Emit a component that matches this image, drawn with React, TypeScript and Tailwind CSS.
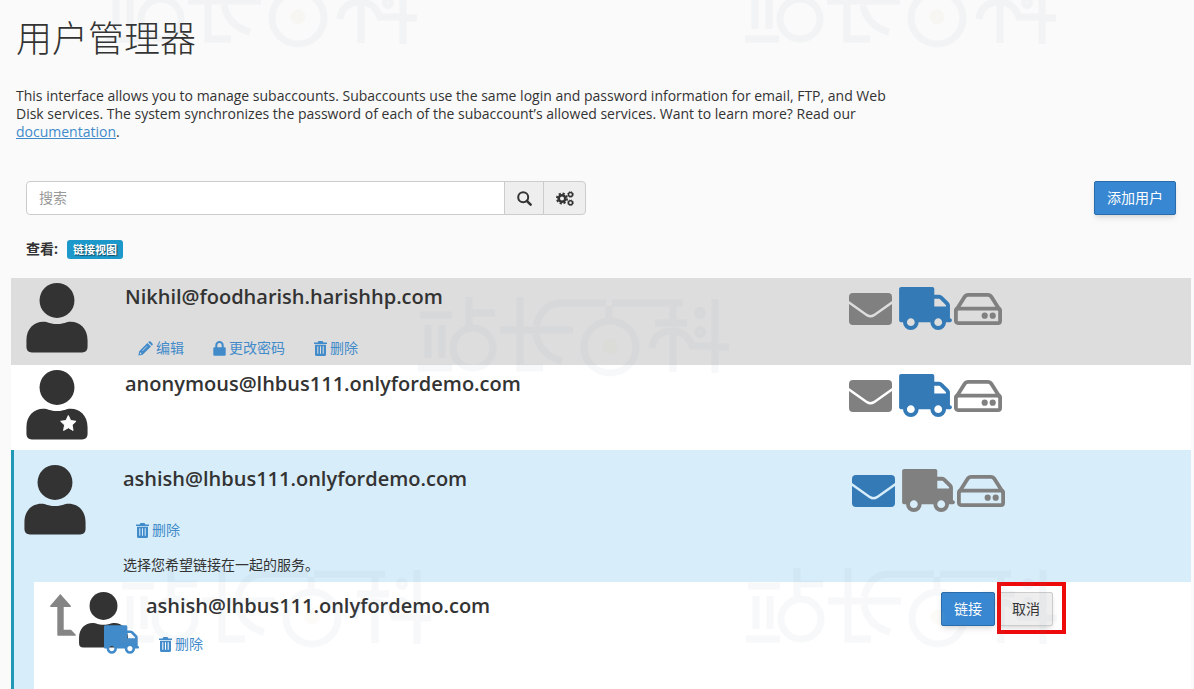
import type { ReactNode } from "react"
import clsx from "clsx"

type ServiceState = "on" | "off"

interface Services {
  email: ServiceState
  ftp: ServiceState
  disk: ServiceState
}

function TruckIcon({ className }: { className?: string }) {
  return (
    <svg viewBox="0 256 1728 1408" className={className} fill="currentColor" aria-hidden="true">
      <g transform="matrix(-1 0 0 1 1792 0)">
        <path d="M640 1408q0-52-38-90t-90-38-90 38-38 90 38 90 90 38 90-38 38-90zm-384-512h384v-256h-158q-13 0-22 9l-195 195q-9 9-9 22v30zm1280 512q0-52-38-90t-90-38-90 38-38 90 38 90 90 38 90-38 38-90zm256-1088v1024q0 15-4 26.5t-13.5 18.5-16.5 11.5-23.5 6-22.5 2-25.5 0-22.5-.5q0 106-75 181t-181 75-181-75-75-181h-384q0 106-75 181t-181 75-181-75-75-181h-64q-3 0-22.5.5t-25.5 0-22.5-2-23.5-6-16.5-11.5-13.5-18.5-4-26.5q0-26 19-45t45-19v-320q0-8-.5-35t0-38 2.5-34.5 6.5-37 14-30.5 22.5-30l198-198q19-19 50.5-32t58.5-13h160v-192q0-26 19-45t45-19h1024q26 0 45 19t19 45z" />
      </g>
    </svg>
  )
}

function EnvelopeIcon({ className }: { className?: string }) {
  return (
    <svg viewBox="0 0 43 32" className={className} fill="currentColor" aria-hidden="true">
      <path d="M4 0H39Q43 0 43 4V8L25 20.800Q21.500 23 18 20.800L0 8V4Q0 0 4 0Z" />
      <path d="M0 11L17 23Q21.500 26 26 23L43 11V28Q43 32 39 32H4Q0 32 0 28Z" />
    </svg>
  )
}

function DiskIcon({ className }: { className?: string }) {
  return (
    <svg viewBox="0 0 48 32" className={className} fill="none" stroke="currentColor" strokeWidth="3.800" aria-hidden="true">
      <rect x="1.900" y="15.600" width="44.200" height="14.500" rx="2" />
      <path d="M2.300 17L10.500 4Q11.800 1.900 14.300 1.900H33.700Q36.200 1.900 37.500 4L45.700 17" />
      <circle cx="30.700" cy="22.700" r="3.100" fill="currentColor" stroke="none" />
      <circle cx="38.700" cy="22.700" r="3.100" fill="currentColor" stroke="none" />
    </svg>
  )
}

function UserIcon({ className, starred }: { className?: string; starred?: boolean }) {
  return (
    <svg viewBox="0 0 62 71" className={className} fill="#333" aria-hidden="true">
      <circle cx="31" cy="17.700" r="17.700" />
      <path d="M0 58C0 46 8 39.300 17 39.300C22 39.300 24 41.600 31 41.600S40 39.300 45 39.300C54 39.300 62 46 62 58V65Q62 70.500 56.500 70.500H5.500Q0 70.500 0 65Z" />
      {starred && (
        <path
          d="M42.500 46.200L44.900 51.300L50.300 52L46.300 55.800L47.300 61.300L42.500 58.600L37.700 61.300L38.700 55.800L34.700 52L40.100 51.300Z"
          fill="#fff"
          stroke="#fff"
          strokeLinejoin="round"
        />
      )}
    </svg>
  )
}

function PencilIcon() {
  return (
    <svg viewBox="0 0 15 15" className="h-[15px] w-[15px]" fill="currentColor" aria-hidden="true">
      <path d="M10.200 1.200L11 .5Q11.800 -.2 12.600 .6L14.400 2.400Q15.200 3.200 14.500 4L13.800 4.800Z" />
      <path fillRule="evenodd" d="M9.400 2L13 5.600L4.600 13.800L.4 14.600L1.200 10.200ZM9 4.900L4.200 9.600L4.600 10L9.400 5.300ZM2.200 11.300L1.800 13.200L3.700 12.800Z" />
    </svg>
  )
}

function LockIcon() {
  return (
    <svg viewBox="0 0 13 15" className="h-[15px] w-[13px]" aria-hidden="true">
      <path d="M3.300 7V4.200A3.200 3.200 0 0 1 9.700 4.200V7" fill="none" stroke="currentColor" strokeWidth="2" />
      <rect x=".3" y="6.300" width="12.400" height="8.400" rx="1.200" fill="currentColor" />
    </svg>
  )
}

function TrashIcon() {
  return (
    <svg viewBox="0 0 13 15" className="h-[15px] w-[13px]" fill="currentColor" aria-hidden="true">
      <path d="M4.500 0H8.500L9.500 1.400H13V3H0V1.400H3.500Z" />
      <path fillRule="evenodd" d="M1 3.800H12V13.500Q12 15 10.500 15H2.500Q1 15 1 13.500ZM3.300 5.300V12.800H4.300V5.300ZM6 5.300V12.800H7V5.300ZM8.700 5.300V12.800H9.700V5.300Z" />
    </svg>
  )
}

function SearchIcon() {
  return (
    <svg viewBox="0 0 15 15" className="h-[15px] w-[15px]" fill="none" stroke="currentColor" aria-hidden="true">
      <circle cx="6.200" cy="6.200" r="5" strokeWidth="2" />
      <path d="M9.800 9.800L13.600 13.600" strokeWidth="2.600" strokeLinecap="round" />
    </svg>
  )
}

function GearsIcon() {
  return (
    <svg viewBox="0 0 18 15" className="h-[15px] w-[18px]" fill="none" stroke="currentColor" aria-hidden="true">
      <circle cx="6" cy="7.500" r="3.300" strokeWidth="2.600" />
      <circle cx="6" cy="7.500" r="5.100" strokeWidth="1.800" strokeDasharray="2.200 1.800" />
      <circle cx="14.500" cy="3.500" r="2" strokeWidth="1.500" />
      <circle cx="14.500" cy="3.500" r="2.900" strokeWidth=".8" strokeDasharray="1.200 1.100" />
      <circle cx="14.500" cy="11.800" r="2" strokeWidth="1.500" />
      <circle cx="14.500" cy="11.800" r="2.900" strokeWidth=".8" strokeDasharray="1.200 1.100" />
    </svg>
  )
}

function Watermark({ className }: { className: string }) {
  return (
    <svg
      viewBox="0 0 312 82"
      className={clsx("pointer-events-none absolute h-[82px] w-[312px] opacity-[0.05]", className)}
      fill="none"
      stroke="#6f8ba5"
      strokeWidth="7"
      aria-hidden="true"
    >
      <path d="M2 20H34M10 30V63M24 30V63M0 73H34M51 2V32M54 18H77" />
      <circle cx="55" cy="53" r="20" />
      <path d="M102 2V73H125M82 35H99M105 35H155M118 31Q124 8 144 8H188M194 8H265M118 39Q122 60 144 66" />
      <path d="M191 11V23" />
      <circle cx="192" cy="52" r="26" />
      <circle cx="192" cy="51" r="4" stroke="#c9c28a" />
      <path d="M255 11V25M237 28H269M255 39V77M234 53Q236 36 255 36Q268 36 274 51H294M297 4V78M300 52H311" />
      <circle cx="282" cy="18" r="2.500" />
      <circle cx="282" cy="37" r="2.500" />
    </svg>
  )
}

function ActionLink({ icon, children }: { icon: ReactNode; children: ReactNode }) {
  return (
    <a href="#" className="flex items-center gap-[3px] text-[#428bca]">
      {icon}
      {children}
    </a>
  )
}

function ServiceIcons({ email, ftp, disk }: Services) {
  const color = (state: ServiceState) => (state === "on" ? "text-[#337ab7]" : "text-[#808080]")
  return (
    <div className="flex w-[342px] shrink-0 items-center pt-1">
      <EnvelopeIcon className={clsx("mr-[7px] h-8 w-[43px]", color(email))} />
      <TruckIcon className={clsx("mr-[2px] h-[43px] w-[53px]", color(ftp))} />
      <DiskIcon className={clsx("h-8 w-12", color(disk))} />
    </div>
  )
}

interface UserRowProps {
  name: string
  services: Services
  starred?: boolean
  actions?: ReactNode
}

function UserRow({ name, services, starred, actions }: UserRowProps) {
  return (
    <div className="flex items-start">
      <UserIcon starred={starred} className="mr-[37px] mb-px h-[70px] w-[62px] shrink-0" />
      <div className="min-w-0 flex-1">
        <h2 className="text-[20px] leading-7 font-semibold">{name}</h2>
        {actions && <div className="mt-[27px] flex gap-[29px] pl-[13px]">{actions}</div>}
      </div>
      <ServiceIcons {...services} />
    </div>
  )
}

export default function App() {
  return (
    <div className="relative flex min-h-screen flex-col overflow-hidden bg-[#fafafa] font-['Open_Sans','Noto_Sans_CJK_SC',sans-serif] text-[14px] leading-5 text-[#333]">
      <header className="px-4 pt-[15px]">
        <h1 className="text-[36px] leading-[48px] font-light">用户管理器</h1>
        <p className="mt-6 max-w-[872px] leading-[18px]">
          This interface allows you to manage subaccounts. Subaccounts use the same login and password information for
          email, FTP, and Web Disk services. The system synchronizes the password of each of the subaccount’s allowed
          services. Want to learn more? Read our{" "}
          <a href="#" className="text-[#428bca] underline">
            documentation
          </a>
          .
        </p>
      </header>

      {/* Search and add user */}
      <div className="mt-10 flex items-start justify-between pr-[18px] pl-[26px]">
        <form className="flex h-[34px] w-[560px] rounded border border-[#ccc] bg-[#eee]">
          <input
            type="search"
            aria-label="搜索"
            placeholder="搜索"
            className="min-w-0 flex-1 rounded-l bg-white px-3 placeholder:text-[#999]"
          />
          <button type="button" aria-label="Search" className="flex w-[39px] items-center justify-center border-l border-[#ccc]">
            <SearchIcon />
          </button>
          <button type="button" aria-label="Settings" className="flex w-[42px] items-center justify-center border-l border-[#ccc]">
            <GearsIcon />
          </button>
        </form>
        <button type="button" className="h-[34px] rounded-[2px] border border-[#2a6cab] bg-[#3787d2] px-3 text-white shadow-md">
          添加用户
        </button>
      </div>

      <div className="mt-6 mb-[19px] flex items-center gap-[9px] pl-[26px]">
        <b className="leading-5">查看:</b>
        <span className="rounded-[3px] bg-[#1c98ca] px-[6px] text-[11px] leading-[19px] font-bold text-white [text-shadow:1px_1px_1px_#0008]">
          链接视图
        </span>
      </div>

      {/* Accounts */}
      <main className="mr-[3px] ml-[11px] flex flex-1 flex-col">
        <section className="bg-[#ddd] pt-[5px] pb-[7px] pl-[15px]">
          <UserRow
            name="Nikhil@foodharish.harishhp.com"
            services={{ email: "off", ftp: "on", disk: "off" }}
            actions={
              <>
                <ActionLink icon={<PencilIcon />}>编辑</ActionLink>
                <ActionLink icon={<LockIcon />}>更改密码</ActionLink>
                <ActionLink icon={<TrashIcon />}>删除</ActionLink>
              </>
            }
          />
        </section>

        <section className="bg-white pt-[5px] pb-[9px] pl-[15px]">
          <UserRow
            name="anonymous@lhbus111.onlyfordemo.com"
            services={{ email: "off", ftp: "on", disk: "off" }}
            starred
          />
        </section>

        <section className="flex flex-1 flex-col border-l-3 border-[#2298b9] bg-[#d7edf9]">
          <div className="-mr-[3px] pt-[15px] pb-[7px] pl-[10px]">
            <UserRow
              name="ashish@lhbus111.onlyfordemo.com"
              services={{ email: "on", ftp: "off", disk: "off" }}
              actions={<ActionLink icon={<TrashIcon />}>删除</ActionLink>}
            />
            <p className="mt-[15px] pl-[99px]">选择您希望链接在一起的服务。</p>
          </div>

          <div className="ml-5 flex flex-1 items-start bg-white pt-[10px] pb-[35px] pl-4">
            <svg viewBox="0 0 26 42" className="mt-[2px] mr-[3px] h-[42px] w-[26px] shrink-0" fill="#858585" aria-hidden="true">
              <path d="M10.300 0L21 12Q21 13 20 13H13.700V35.700H21L26 41Q26 41.800 25 41.800H8Q7.300 41.800 7.300 41V13H1Q0 13 0 12Z" />
            </svg>
            <div className="relative mr-[18px] shrink-0">
              <UserIcon className="h-14 w-[49px]" />
              <TruckIcon className="absolute top-[33px] left-[25px] h-[29px] w-[35px] text-[#428bca]" />
            </div>
            <div className="min-w-0 flex-1">
              <h2 className="text-[20px] leading-7 font-semibold">ashish@lhbus111.onlyfordemo.com</h2>
              <div className="mt-[14px] flex pl-[13px]">
                <ActionLink icon={<TrashIcon />}>删除</ActionLink>
              </div>
            </div>
            <div className="flex w-[250px] shrink-0 gap-1">
              <button type="button" className="h-[34px] rounded-[2px] border border-[#2a6cab] bg-[#3787d2] px-3 text-white shadow-md">
                链接
              </button>
              <div className="relative">
                <button type="button" className="h-[34px] rounded-[2px] border border-[#ccc] bg-[#eee] px-3 shadow-md">
                  取消
                </button>
                <span className="pointer-events-none absolute -top-[10px] -left-[2px] h-[52px] w-[69px] border-4 border-[#ee0a0a]" />
              </div>
            </div>
          </div>
        </section>
      </main>

      <Watermark className="top-[-34px] left-[106px]" />
      <Watermark className="top-[-34px] left-[745px]" />
      <Watermark className="top-[295px] left-[418px]" />
      <Watermark className="top-[566px] left-[120px]" />
      <Watermark className="top-[566px] left-[746px]" />
    </div>
  )
}
